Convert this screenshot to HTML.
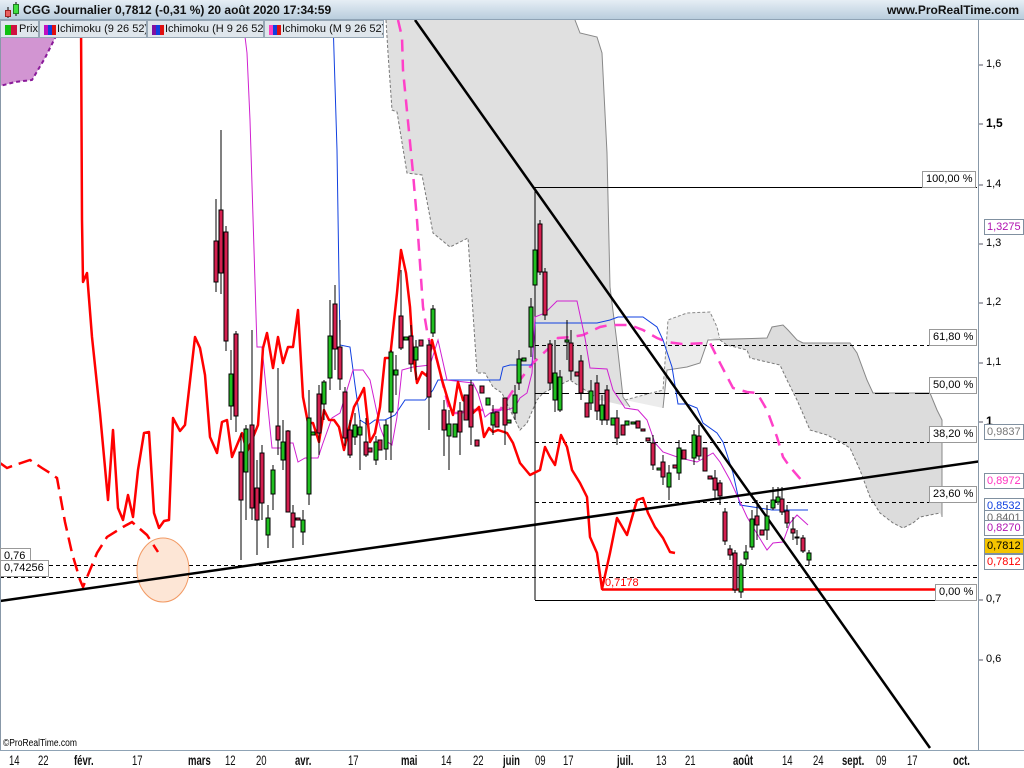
<!DOCTYPE html>
<html><head><meta charset="utf-8"><style>
*{margin:0;padding:0;box-sizing:border-box}
body{width:1024px;height:768px;overflow:hidden;background:#fff;font-family:"Liberation Sans",sans-serif;position:relative}
#hdr{position:absolute;left:0;top:0;width:1024px;height:20px;background:linear-gradient(#e6eef5,#b9cddd);border-bottom:1px solid #8fa3b5}
#hdr .t{position:absolute;left:23px;top:3px;font-size:12px;font-weight:bold;color:#111}
#hdr .r{position:absolute;right:5px;top:3px;font-size:12px;font-weight:bold;color:#111}
.leg{position:absolute;top:20px;height:18px;background:#dfe6ec;border:1px solid #97a7b5;font-size:11px;color:#111;padding:2px 0 0 18px;white-space:nowrap;overflow:hidden}
.leg i{position:absolute;left:4px;top:4px;width:12px;height:10px}
.ax{position:absolute;font-size:11px;color:#000}
.bx{position:absolute;font-size:11px;border:1px solid #8090a0;background:#fff;padding:0 2px;line-height:14px;height:16px}
.fb{position:absolute;font-size:11px;border:1px solid #999;background:#fff;padding:0 3px;line-height:14px;height:17px}
#bot{position:absolute;left:0;top:750px;width:1024px;height:18px;border-top:1px solid #8fa3b5;background:#fff}
#bot span{position:absolute;top:1px;font-size:14px;transform:scaleX(.68);transform-origin:left;color:#111}
#bot b{position:absolute;top:1px;font-size:14px;transform:scaleX(.68);transform-origin:left;color:#111}
</style></head><body>
<svg width="1024" height="768" style="position:absolute;left:0;top:0">
<polygon points="0,20 66,20 55,38 45,58 32,80 15,82 0,86" fill="#d295d2" stroke="#8a1a9a" stroke-width="2" stroke-dasharray="4,3"/>
<polygon points="386,20 575,20 580,33 597,37 602,53 607,153 610,287 617,343 623,397 630,407 600,400 570,380 543,393 537,400 527,423 520,430 510,410 502,393 493,387 485,373 477,373 468,238 450,247 433,233 422,175 407,173 397,112 392,110 388,53" fill="#e0e0e0"/>
<polyline points="386,20 388,53 392,110 397,112 407,173 422,175 433,233 450,247 468,238 477,373 485,373 493,387 502,393 510,410 520,430 527,423 537,400 543,393 570,380 600,400" fill="none" stroke="#777" stroke-dasharray="3,2"/>
<polyline points="575,20 580,33 597,37 602,53 607,153 610,287 617,343 623,397 630,407" fill="none" stroke="#888"/>
<polygon points="625,400 663,390 668,320 687,313 710,312 717,327 720,340 710,338 708,340 700,363 687,367 667,370 663,408" fill="#ececec"/>
<polyline points="625,400 663,390 668,320 687,313 710,312 717,327 720,340" fill="none" stroke="#888" stroke-dasharray="3,2"/>
<polygon points="710,338 767,338 772,327 783,325 788,330 797,340 803,343 850,343 857,353 867,380 873,393 930,393 937,410 942,420 942,517 940,513 920,517 913,523 903,528 893,523 880,513 870,497 860,470 850,448 837,440 827,435 810,430 797,400 787,380 780,365 767,362 750,358 747,350 727,345 720,340" fill="#dcdcdc"/>
<polyline points="720,340 727,345 747,350 750,358 767,362 780,365 787,380 797,400 810,430 827,435 837,440 850,448 860,470 870,497 880,513 893,523 903,528 913,523 920,517 940,513" fill="none" stroke="#777" stroke-dasharray="3,2"/>
<polyline points="663,408 667,370 687,367 700,363 708,340 767,338 772,327 783,325 788,330 797,340 803,343 850,343 857,353 867,380 873,393 930,393 937,410 942,420 942,517" fill="none" stroke="#888"/>
<g stroke="#000" stroke-width="1">
<line x1="535" y1="187.5" x2="977" y2="187.5"/>
<line x1="535" y1="187" x2="535" y2="600"/>
<line x1="535" y1="345.5" x2="977" y2="345.5" stroke-dasharray="4,3"/>
<line x1="535" y1="393.5" x2="977" y2="393.5" stroke-dasharray="14,6"/>
<line x1="535" y1="442.5" x2="977" y2="442.5" stroke-dasharray="4,3"/>
<line x1="535" y1="502.5" x2="977" y2="502.5" stroke-dasharray="4,3"/>
<line x1="535" y1="600.5" x2="977" y2="600.5"/>
<line x1="0" y1="565.5" x2="977" y2="565.5" stroke-dasharray="4,3"/>
<line x1="0" y1="577.5" x2="977" y2="577.5" stroke-dasharray="4,3"/>
</g>
<line x1="602" y1="589.5" x2="977" y2="589.5" stroke="#ff0000" stroke-width="2.5"/>
<ellipse cx="163" cy="570" rx="26" ry="32" fill="#fde6d6" stroke="#f29a64"/>
<polyline points="398,20 402,37 403,70 413,173 417,220 423,307 428,337 437,360 450,413 460,413 470,410 493,410 500,410 520,380 533,363 550,347 558,338 572,337 583,335 600,327 610,325 630,325 643,330 657,338 667,342 682,344 710,343 720,363 733,388 747,392 757,393 767,410 777,437 783,457 790,467 803,482 807,483" fill="none" stroke="#ff40c8" stroke-width="2.5" stroke-dasharray="12,8"/>
<polyline points="0,463 7,468 15,465 30,460 42,468 50,473 57,478 65,522 72,553 80,580 83,587 97,553 107,537 123,527 132,522 147,535 158,552" fill="none" stroke="#ff0000" stroke-width="2.5" stroke-dasharray="14,7"/>
<polyline points="333,20 337,150 340,345 350,347 355,385 360,420 368,425 375,420 385,420 395,415 405,400 425,400 433,390 438,380 500,380 503,367 510,365 532,365 535,323 597,323 610,320 618,317 643,317 657,327 663,340 672,367 678,404 687,404 697,408 703,423 717,433 723,442 733,473 740,505 753,507 772,510 808,510" fill="none" stroke="#1040e0" stroke-width="1"/>
<polyline points="243,20 247,53 250,120 257,347 262,347 272,448 285,448 290,443 293,443 298,462 305,458 318,458 323,443 332,418 340,413 353,370 363,370 370,380 380,427 385,440 392,445 397,417 402,370 413,367 430,365 438,340 447,380 473,383 478,393 485,417 490,413 500,410 507,410 515,407 520,398 527,393 532,373 535,317 545,313 557,301 577,301 585,338 590,368 607,369 613,390 625,408 638,410 647,420 655,443 663,452 680,458 697,462 713,453 720,462 730,480 747,517 753,527 762,542 767,550 773,543 783,542 790,523 797,515 808,525" fill="none" stroke="#d020d0" stroke-width="1"/>
<polyline points="81,20 82,220 83,282 87,273 92,337 100,413 108,500 113,430 118,508 123,520 128,495 133,517 138,470 144,433 149,432 154,513 159,528 164,521 169,520 173,418 180,431 185,425 195,337 200,348 205,375 210,437 217,453 222,422 227,420 232,457 242,433 247,452 258,425 263,348 267,333 273,368 278,337 283,363 288,347 293,347 298,310 303,397 308,423 313,423 319,442 324,410 329,420 334,420 339,427 344,450 349,428 354,407 359,398 364,388 370,442 375,433 380,407 385,358 390,358 397,293 401,250 406,273 410,307 413,353 417,383 422,372 427,376 432,340 437,360 442,380 448,400 453,415 458,382 463,400 468,403 473,413 479,407 484,437 489,428 493,432 498,430 507,433 513,443 520,463 530,475 540,470 545,447 550,457 555,465 561,435 567,447 572,470 580,483 587,497 590,537 597,553 602,589 610,553 617,518 627,535 637,500 643,498 648,513 655,527 663,538 670,552 675,553" fill="none" stroke="#ff0000" stroke-width="2.5" stroke-linejoin="round"/>
<line x1="0" y1="601" x2="1024" y2="455" stroke="#000" stroke-width="2.5"/>
<line x1="415" y1="20" x2="930" y2="748" stroke="#000" stroke-width="2.5"/>
<g stroke="#000" stroke-width="1">
<g fill="#d42050">
<line x1="216" y1="199" x2="216" y2="292"/><rect x="214" y="241" width="4" height="41"/>
<line x1="221" y1="130" x2="221" y2="294"/><rect x="219" y="210" width="4" height="63"/>
<line x1="226" y1="226" x2="226" y2="351"/><rect x="224" y="232" width="4" height="109"/>
<line x1="236" y1="331" x2="236" y2="432"/><rect x="234" y="334" width="4" height="82"/>
<line x1="241" y1="433" x2="241" y2="560"/><rect x="239" y="452" width="4" height="48"/>
<line x1="252" y1="330" x2="252" y2="520"/><rect x="250" y="425" width="4" height="83"/>
<line x1="257" y1="460" x2="257" y2="555"/><rect x="255" y="488" width="4" height="32"/>
<line x1="262" y1="445" x2="262" y2="520"/><rect x="260" y="453" width="4" height="50"/>
<line x1="278" y1="368" x2="278" y2="455"/><rect x="276" y="426" width="4" height="14"/>
<line x1="288" y1="430" x2="288" y2="512"/><rect x="286" y="431" width="4" height="81"/>
<line x1="293" y1="505" x2="293" y2="548"/><rect x="291" y="513" width="4" height="14"/>
<rect x="296" y="518" width="4" height="2"/>
<line x1="319" y1="385" x2="319" y2="455"/><rect x="317" y="394" width="4" height="39"/>
<line x1="335" y1="285" x2="335" y2="370"/><rect x="333" y="304" width="4" height="45"/>
<line x1="340" y1="320" x2="340" y2="390"/><rect x="338" y="347" width="4" height="32"/>
<line x1="345" y1="387" x2="345" y2="446"/><rect x="343" y="392" width="4" height="46"/>
<line x1="350" y1="420" x2="350" y2="458"/><rect x="348" y="430" width="4" height="25"/>
<line x1="366" y1="418" x2="366" y2="457"/><rect x="364" y="442" width="4" height="13"/>
<rect x="368" y="448" width="4" height="4"/>
<rect x="378" y="440" width="4" height="10"/>
<line x1="401" y1="270" x2="401" y2="350"/><rect x="399" y="316" width="4" height="32"/>
<line x1="411" y1="325" x2="411" y2="372"/><rect x="409" y="336" width="4" height="28"/>
<rect x="419" y="340" width="4" height="6"/>
<line x1="429" y1="340" x2="429" y2="430"/><rect x="427" y="345" width="4" height="52"/>
<line x1="444" y1="400" x2="444" y2="456"/><rect x="442" y="410" width="4" height="20"/>
<line x1="460" y1="402" x2="460" y2="455"/><rect x="458" y="411" width="4" height="21"/>
<rect x="464" y="395" width="4" height="25"/>
<line x1="471" y1="380" x2="471" y2="445"/><rect x="469" y="385" width="4" height="42"/>
<rect x="475" y="440" width="4" height="6"/>
<rect x="480" y="386" width="4" height="7"/>
<rect x="495" y="412" width="4" height="15"/>
<line x1="505" y1="398" x2="505" y2="445"/><rect x="503" y="398" width="4" height="27"/>
<line x1="540" y1="220" x2="540" y2="275"/><rect x="538" y="224" width="4" height="48"/>
<line x1="545" y1="268" x2="545" y2="320"/><rect x="543" y="272" width="4" height="43"/>
<line x1="550" y1="340" x2="550" y2="390"/><rect x="548" y="344" width="4" height="39"/>
<line x1="571" y1="330" x2="571" y2="380"/><rect x="569" y="343" width="4" height="28"/>
<rect x="575" y="372" width="4" height="4"/>
<line x1="581" y1="355" x2="581" y2="400"/><rect x="579" y="361" width="4" height="32"/>
<rect x="585" y="403" width="4" height="14"/>
<line x1="597" y1="375" x2="597" y2="420"/><rect x="595" y="383" width="4" height="28"/>
<line x1="607" y1="385" x2="607" y2="425"/><rect x="605" y="390" width="4" height="30"/>
<line x1="617" y1="410" x2="617" y2="445"/><rect x="615" y="418" width="4" height="20"/>
<rect x="621" y="425" width="4" height="10"/>
<rect x="636" y="421" width="4" height="7"/>
<rect x="641" y="429" width="4" height="2"/>
<rect x="646" y="438" width="4" height="3"/>
<line x1="653" y1="435" x2="653" y2="470"/><rect x="651" y="443" width="4" height="22"/>
<line x1="663" y1="455" x2="663" y2="485"/><rect x="661" y="462" width="4" height="15"/>
<rect x="673" y="465" width="4" height="3"/>
<rect x="682" y="450" width="4" height="9"/>
<line x1="699" y1="425" x2="699" y2="460"/><rect x="697" y="436" width="4" height="20"/>
<rect x="703" y="448" width="4" height="23"/>
<rect x="708" y="476" width="4" height="3"/>
<line x1="715" y1="470" x2="715" y2="500"/><rect x="713" y="478" width="4" height="12"/>
<line x1="720" y1="480" x2="720" y2="505"/><rect x="718" y="483" width="4" height="13"/>
<line x1="725" y1="508" x2="725" y2="545"/><rect x="723" y="512" width="4" height="29"/>
<line x1="730" y1="545" x2="730" y2="560"/><rect x="728" y="549" width="4" height="6"/>
<line x1="735" y1="550" x2="735" y2="593"/><rect x="733" y="553" width="4" height="37"/>
<line x1="757" y1="500" x2="757" y2="540"/><rect x="755" y="516" width="4" height="9"/>
<rect x="760" y="530" width="4" height="5"/>
<line x1="782" y1="487" x2="782" y2="515"/><rect x="780" y="499" width="4" height="13"/>
<line x1="787" y1="505" x2="787" y2="528"/><rect x="785" y="511" width="4" height="12"/>
<line x1="793" y1="517" x2="793" y2="540"/><rect x="791" y="529" width="4" height="4"/>
<line x1="797" y1="530" x2="797" y2="545"/><rect x="795" y="537" width="4" height="1"/>
<line x1="803" y1="535" x2="803" y2="553"/><rect x="801" y="538" width="4" height="13"/>
</g>
<g fill="#20c020">
<line x1="231" y1="350" x2="231" y2="420"/><rect x="229" y="374" width="4" height="32"/>
<line x1="246" y1="425" x2="246" y2="520"/><rect x="244" y="429" width="4" height="43"/>
<line x1="268" y1="505" x2="268" y2="548"/><rect x="266" y="518" width="4" height="17"/>
<line x1="273" y1="465" x2="273" y2="510"/><rect x="271" y="470" width="4" height="24"/>
<line x1="283" y1="420" x2="283" y2="470"/><rect x="281" y="442" width="4" height="18"/>
<line x1="303" y1="510" x2="303" y2="545"/><rect x="301" y="520" width="4" height="12"/>
<line x1="309" y1="390" x2="309" y2="505"/><rect x="307" y="418" width="4" height="76"/>
<rect x="311" y="432" width="4" height="3"/>
<line x1="324" y1="380" x2="324" y2="420"/><rect x="322" y="382" width="4" height="22"/>
<line x1="330" y1="300" x2="330" y2="390"/><rect x="328" y="336" width="4" height="42"/>
<line x1="355" y1="413" x2="355" y2="445"/><rect x="353" y="425" width="4" height="12"/>
<line x1="360" y1="420" x2="360" y2="470"/><rect x="358" y="427" width="4" height="8"/>
<line x1="376" y1="436" x2="376" y2="465"/><rect x="374" y="442" width="4" height="18"/>
<line x1="386" y1="420" x2="386" y2="460"/><rect x="384" y="425" width="4" height="24"/>
<line x1="391" y1="350" x2="391" y2="460"/><rect x="389" y="352" width="4" height="60"/>
<line x1="396" y1="355" x2="396" y2="395"/><rect x="394" y="370" width="4" height="5"/>
<rect x="404" y="337" width="4" height="3"/>
<line x1="416" y1="340" x2="416" y2="380"/><rect x="414" y="347" width="4" height="13"/>
<line x1="433" y1="305" x2="433" y2="337"/><rect x="431" y="309" width="4" height="24"/>
<line x1="449" y1="410" x2="449" y2="470"/><rect x="447" y="424" width="4" height="12"/>
<rect x="453" y="424" width="4" height="13"/>
<rect x="486" y="398" width="4" height="7"/>
<line x1="493" y1="405" x2="493" y2="435"/><rect x="491" y="413" width="4" height="12"/>
<rect x="507" y="420" width="4" height="3"/>
<line x1="515" y1="385" x2="515" y2="420"/><rect x="513" y="395" width="4" height="18"/>
<line x1="519" y1="350" x2="519" y2="390"/><rect x="517" y="359" width="4" height="24"/>
<rect x="522" y="358" width="4" height="3"/>
<line x1="531" y1="298" x2="531" y2="357"/><rect x="529" y="307" width="4" height="40"/>
<line x1="535" y1="187" x2="535" y2="290"/><rect x="533" y="250" width="4" height="35"/>
<line x1="555" y1="340" x2="555" y2="412"/><rect x="553" y="373" width="4" height="27"/>
<line x1="560" y1="370" x2="560" y2="412"/><rect x="558" y="377" width="4" height="33"/>
<line x1="567" y1="320" x2="567" y2="360"/><rect x="565" y="340" width="4" height="2"/>
<line x1="591" y1="380" x2="591" y2="410"/><rect x="589" y="391" width="4" height="12"/>
<line x1="602" y1="395" x2="602" y2="425"/><rect x="600" y="405" width="4" height="15"/>
<rect x="611" y="418" width="4" height="7"/>
<rect x="625" y="421" width="4" height="4"/>
<rect x="631" y="422" width="4" height="2"/>
<rect x="657" y="468" width="4" height="2"/>
<line x1="669" y1="465" x2="669" y2="500"/><rect x="667" y="473" width="4" height="14"/>
<line x1="679" y1="440" x2="679" y2="480"/><rect x="677" y="448" width="4" height="25"/>
<line x1="694" y1="430" x2="694" y2="465"/><rect x="692" y="435" width="4" height="23"/>
<line x1="741" y1="563" x2="741" y2="598"/><rect x="739" y="565" width="4" height="27"/>
<line x1="746" y1="545" x2="746" y2="565"/><rect x="744" y="552" width="4" height="7"/>
<line x1="752" y1="510" x2="752" y2="550"/><rect x="750" y="519" width="4" height="28"/>
<line x1="767" y1="505" x2="767" y2="540"/><rect x="765" y="516" width="4" height="14"/>
<line x1="773" y1="487" x2="773" y2="510"/><rect x="771" y="500" width="4" height="8"/>
<line x1="778" y1="487" x2="778" y2="505"/><rect x="776" y="497" width="4" height="5"/>
<line x1="809" y1="550" x2="809" y2="565"/><rect x="807" y="553" width="4" height="7"/>
</g>
</g>
<text x="605" y="586" font-size="11" fill="#ff0000" font-family="Liberation Sans,sans-serif">0,7178</text>
<rect x="978" y="20" width="46" height="730" fill="#fff"/>
<line x1="978.5" y1="20" x2="978.5" y2="750" stroke="#8898a8"/>
<g stroke="#556" stroke-width="1">
<line x1="979" y1="65" x2="983" y2="65"/><line x1="979" y1="124" x2="983" y2="124"/><line x1="979" y1="185" x2="983" y2="185"/><line x1="979" y1="244" x2="983" y2="244"/><line x1="979" y1="303" x2="983" y2="303"/><line x1="979" y1="363" x2="983" y2="363"/><line x1="979" y1="422" x2="983" y2="422"/><line x1="979" y1="600" x2="983" y2="600"/><line x1="979" y1="660" x2="983" y2="660"/>
</g>
<line x1="0.5" y1="38" x2="0.5" y2="750" stroke="#8898a8"/>
</svg>
<div id="hdr"><svg width="18" height="18" style="position:absolute;left:3px;top:1px"><line x1="5" y1="6" x2="5" y2="17" stroke="#000"/><rect x="2.5" y="9.5" width="5" height="6" fill="#e86060" stroke="#a02020"/><line x1="13" y1="1" x2="13" y2="15" stroke="#000"/><rect x="10.5" y="3.5" width="5" height="9" fill="#40e040" stroke="#208020"/></svg><span class="t">CGG Journalier 0,7812 (-0,31 %) 20 août 2020 17:34:59</span><span class="r">www.ProRealTime.com</span></div>
<div class="leg" style="left:0;width:39px"><i style="background:linear-gradient(90deg,#10c010 50%,#d01040 50%)"></i>Prix</div>
<div class="leg" style="left:39px;width:108px;padding-left:17px"><i style="background:linear-gradient(90deg,#c010c0 33%,#1040e0 33%,#1040e0 66%,#e01010 66%)"></i>Ichimoku (9 26 52)</div>
<div class="leg" style="left:147px;width:117px;padding-left:17px"><i style="background:linear-gradient(90deg,#8010a0 33%,#1040e0 33%,#1040e0 66%,#e01010 66%)"></i>Ichimoku (H 9 26 52)</div>
<div class="leg" style="left:264px;width:120px;padding-left:17px"><i style="background:linear-gradient(90deg,#ff40c0 33%,#1040e0 33%,#1040e0 66%,#e01010 66%)"></i>Ichimoku (M 9 26 52)</div>
<div class="ax" style="left:986px;top:58px">1,6</div>
<div class="ax" style="left:986px;top:116px;font-weight:bold;font-size:12px">1,5</div>
<div class="ax" style="left:986px;top:178px">1,4</div>
<div class="ax" style="left:986px;top:237px">1,3</div>
<div class="ax" style="left:986px;top:296px">1,2</div>
<div class="ax" style="left:986px;top:356px">1,1</div>
<div class="ax" style="left:986px;top:414px;font-weight:bold;font-size:12px">1</div>
<div class="ax" style="left:986px;top:593px">0,7</div>
<div class="ax" style="left:986px;top:653px">0,6</div>
<div class="bx" style="left:984px;top:219px;color:#b010b0">1,3275</div>
<div class="bx" style="left:984px;top:424px;color:#777">0,9837</div>
<div class="bx" style="left:984px;top:473px;color:#ff30c0">0,8972</div>
<div class="bx" style="left:984px;top:498px;color:#1040e0">0,8532</div>
<div class="bx" style="left:984px;top:510px;color:#666">0,8401</div>
<div class="bx" style="left:984px;top:520px;color:#b010b0">0,8270</div>
<div class="bx" style="left:984px;top:538px;color:#000;background:#f5c400">0,7812</div>
<div class="bx" style="left:984px;top:554px;color:#ff0000">0,7812</div>
<div class="fb" style="left:922px;top:171px">100,00 %</div>
<div class="fb" style="left:929px;top:329px">61,80 %</div>
<div class="fb" style="left:929px;top:377px">50,00 %</div>
<div class="fb" style="left:929px;top:426px">38,20 %</div>
<div class="fb" style="left:929px;top:486px">23,60 %</div>
<div class="fb" style="left:935px;top:584px">0,00 %</div>
<div class="fb" style="left:0;top:548px;width:31px">0,76</div>
<div class="fb" style="left:0;top:560px;width:49px">0,74256</div>
<div style="position:absolute;left:3px;top:738px;font-size:10px;transform:scaleX(.85);transform-origin:left">©ProRealTime.com</div>
<div id="bot">
<span style="left:9px">14</span><span style="left:38px">22</span><b style="left:74px">févr.</b><span style="left:132px">17</span><b style="left:188px">mars</b><span style="left:225px">12</span><span style="left:256px">20</span><b style="left:295px">avr.</b><span style="left:348px">17</span><b style="left:401px">mai</b><span style="left:441px">14</span><span style="left:473px">22</span><b style="left:503px">juin</b><span style="left:535px">09</span><span style="left:563px">17</span><b style="left:617px">juil.</b><span style="left:656px">13</span><span style="left:685px">21</span><b style="left:733px">août</b><span style="left:782px">14</span><span style="left:813px">24</span><b style="left:842px">sept.</b><span style="left:876px">09</span><span style="left:907px">17</span><b style="left:953px">oct.</b>
</div>
</body></html>
